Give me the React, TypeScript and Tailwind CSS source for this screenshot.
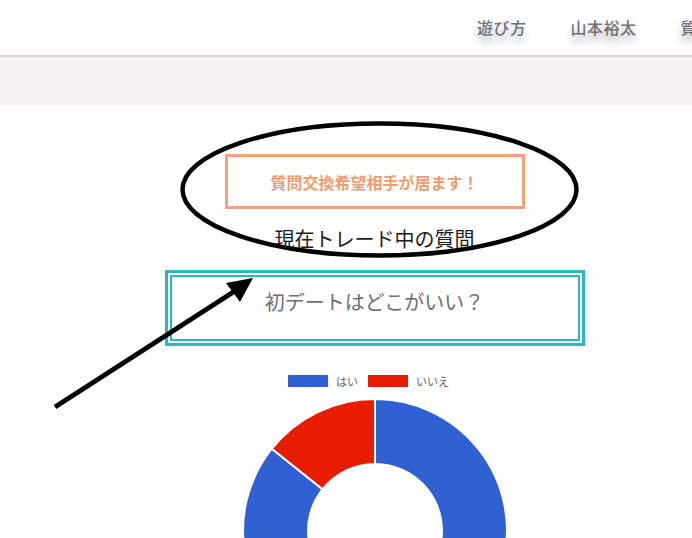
const jp = "font-['Noto_Sans_CJK_JP','Noto_Sans',sans-serif]"

const navItems = ['遊び方', '山本裕太', '質問一覧']

// donut chart: はい 6 / いいえ 1
function Donut() {
	const R = 132
	const r = 67
	const data = [
		{ value: 6, color: '#3160d2' },
		{ value: 1, color: '#e81c00' },
	]
	const total = data.reduce((s, d) => s + d.value, 0)
	let start = 0
	const point = (rad: number, a: number) => [R + rad * Math.sin(a), R - rad * Math.cos(a)]
	return (
		<svg width={R * 2} height={R * 2} viewBox={`0 0 ${R * 2} ${R * 2}`}>
			{data.map((d, i) => {
				const a0 = start
				const a1 = start + (d.value / total) * Math.PI * 2
				start = a1
				const large = a1 - a0 > Math.PI ? 1 : 0
				const [x0, y0] = point(R, a0)
				const [x1, y1] = point(R, a1)
				const [x2, y2] = point(r, a1)
				const [x3, y3] = point(r, a0)
				return (
					<path
						key={i}
						d={`M${x0} ${y0} A${R} ${R} 0 ${large} 1 ${x1} ${y1} L${x2} ${y2} A${r} ${r} 0 ${large} 0 ${x3} ${y3} Z`}
						fill={d.color}
						stroke="#fff"
						strokeWidth={2}
					/>
				)
			})}
		</svg>
	)
}

export default function App() {
	return (
		<div className={`relative min-h-[538px] bg-white overflow-hidden ${jp}`}>
			{/* Header */}
			<header className="h-[57px] border-b-2 border-[#d6d6d6] bg-white overflow-hidden">
				<nav className="flex gap-[44px] pl-[477px] pt-[15px] whitespace-nowrap">
					{navItems.map(item => (
						<a
							key={item}
							className="text-[16px] font-medium tracking-[0.5px] text-[#6d7176] [text-shadow:0_6px_8px_rgba(0,0,0,0.3)]">
							{item}
						</a>
					))}
				</nav>
			</header>

			{/* Band */}
			<div className="h-[48px] bg-[#f3f2f0]" />

			{/* Main */}
			<main className="flex flex-col items-center pl-[57px]">
				<div className="mt-[49px] w-[300px] h-[55px] border-[3px] border-[#f1a37b] flex items-center justify-center">
					<p className="text-[16px] font-bold text-[#ef9c70]">質問交換希望相手が居ます！</p>
				</div>
				<h2 className="mt-[16px] text-[20px] leading-[28px] text-[#1c1c1c]">現在トレード中の質問</h2>

				<div className="mt-[17px] w-[420px] h-[76px] border-[3px] border-[#2bb7c0] p-[2px]">
					<div className="h-full border-2 border-[#2bb7c0] flex justify-center pt-[11px]">
						<p className="text-[20px] leading-[28px] text-[#6b6f74]">初デートはどこがいい？</p>
					</div>
				</div>

				{/* Chart */}
				<div className="mt-[27px] flex flex-col items-center">
					<div className="flex items-center gap-[8px] pr-[12px] text-[11px] text-[#666]">
						<span className="w-[40px] h-[12px] bg-[#3160d2]" />
						<span className="mr-[2px]">はい</span>
						<span className="w-[40px] h-[12px] bg-[#e81c00]" />
						<span>いいえ</span>
					</div>
					<div className="mt-[9px]">
						<Donut />
					</div>
				</div>
			</main>

			{/* Annotations drawn over the page */}
			<svg className="absolute inset-0 pointer-events-none" width="692" height="538">
				<ellipse cx="379.5" cy="189.5" rx="197" ry="66" fill="none" stroke="#000" strokeWidth="4.5" />
				<line x1="55" y1="407" x2="238" y2="289" stroke="#000" strokeWidth="5" />
				<polygon points="253,278 226,283 240,302" fill="#000" />
			</svg>
		</div>
	)
}
